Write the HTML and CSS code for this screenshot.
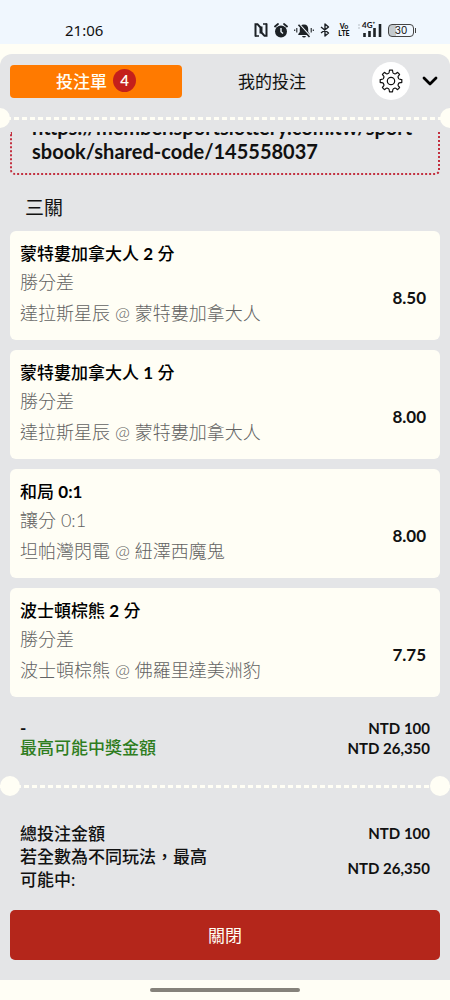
FILE: index.html
```html
<!DOCTYPE html>
<html lang="zh-Hant">
<head>
  <meta charset="UTF-8" />
  <meta name="viewport" content="width=device-width, initial-scale=1" />
  <title>投注單</title>
  <link rel="stylesheet" href="styles.css">
</head>
<body>

  <div class="status-bar">
    <span class="clock">21:06</span>
    <div class="status-icons">
      <svg width="14" height="14" viewBox="0 0 14 14" fill="none" stroke="#1d2226" aria-label="NFC">
        <path d="M1.500 13.500V1.200H3.500L6.500 4.500V10.500" stroke-width="2" />
        <path d="M12.500 .5V12.800H10.500L7.500 9.500V3.500" stroke-width="2" />
        <path d="M1 13H5M9 1H13" stroke-width="1.600" />
      </svg>
      <svg width="14" height="15" viewBox="0 0 14 15" aria-label="Alarm">
        <circle cx="7" cy="8.500" r="6" fill="#1d2226" />
        <path d="M1 3.500L4 1M13 3.500L10 1" stroke="#1d2226" stroke-width="1.800" stroke-linecap="round" />
        <path d="M7 5V8.800L9 10.500" stroke="#f0f7fd" stroke-width="1.400" fill="none" />
      </svg>
      <svg width="20" height="15" viewBox="0 0 20 15" aria-label="Vibrate">
        <path d="M10 1.500C7 1.500 5.800 3.500 5.800 6V9L4.300 11V12H15.700V11L14.200 9V6C14.200 3.500 13 1.500 10 1.500ZM8 13H12Q11.500 14.500 10 14.500Q8.500 14.500 8 13Z" fill="#1d2226" />
        <path d="M5 1L16 13" stroke="#f0f7fd" stroke-width="1.800" />
        <path d="M4.500 1.800L15.500 14" stroke="#1d2226" stroke-width="1.600" />
        <path d="M2.800 5V9.500M.7 6.500V8M17.200 5V9.500M19.300 6.500V8" stroke="#1d2226" stroke-width="1.100" />
      </svg>
      <svg width="10" height="14" viewBox="0 0 10 14" aria-label="Bluetooth">
        <path d="M1 4L8.500 10L5 13V1L8.500 4L1 10" fill="none" stroke="#1d2226" stroke-width="1.400" stroke-linejoin="round" />
      </svg>
      <span class="volte">Vo<br>LTE</span>
      <div class="signal">
        <span class="signal-label">4G⁺</span>
        <svg width="24" height="14" viewBox="0 0 24 14" aria-label="Signal">
          <path d="M1 1V3M1 4V6" stroke="#b5bcc2" stroke-width="1" />
          <path d="M6.500 10V14M11.500 8V14M16.500 5V14M22 1V14" stroke="#1d2226" stroke-width="2.600" />
        </svg>
      </div>
      <div class="battery"><span>30</span></div>
    </div>
  </div>

  <main class="panel">
    <header class="tabs">
      <button class="tab active">投注單 <span class="badge">4</span></button>
      <button class="tab">我的投注</button>
      <button class="settings" aria-label="設定">
        <svg width="24" height="24" viewBox="0 0 24 24" fill="none" stroke="#111" stroke-width="1.200" stroke-linejoin="round">
          <path d="M10.500 1.200H13.500Q13.800 4 14.400 4.300L16 5C16.800 5.200 18 3.600 18.600 3.400L20.600 5.400C20.400 6.200 18.800 7.200 19 8L19.700 9.700C20.100 10.400 22 10.200 22.800 10.600V13.400C22 13.800 20.100 13.600 19.700 14.300L19 16C18.800 16.800 20.400 17.800 20.600 18.600L18.600 20.600C18 20.400 16.800 18.800 16 19L14.400 19.700Q13.800 20 13.500 22.800H10.500Q10.200 20 9.600 19.700L8 19C7.200 18.800 6 20.400 5.400 20.600L3.400 18.600C3.600 17.800 5.200 16.800 5 16L4.300 14.300C3.900 13.600 2 13.800 1.200 13.400V10.600C2 10.200 3.900 10.400 4.300 9.700L5 8C5.200 7.200 3.600 6.200 3.400 5.400L5.400 3.400C6 3.600 7.200 5.200 8 5L9.600 4.300Q10.200 4 10.500 1.200Z" />
          <circle cx="12" cy="12" r="3.700" />
        </svg>
      </button>
      <button class="collapse" aria-label="收合">
        <svg width="16" height="12" viewBox="0 0 16 12" fill="none" stroke="#000" stroke-width="2.800" stroke-linecap="round" stroke-linejoin="round">
          <path d="M2 3L8 9L14 3" />
        </svg>
      </button>
    </header>

    <div class="divider divider-edge"></div>

    <div class="share-box">
      <p>https://member.sportslottery.com.tw/sportsbook/shared-code/145558037</p>
    </div>

    <h2>三關</h2>

    <section class="bets">
      <article class="bet">
        <h3>蒙特婁加拿大人 <b>2</b> 分</h3>
        <div class="bet-row">
          <div class="bet-info">
            <p class="market">勝分差</p>
            <p class="match">達拉斯星辰 @ 蒙特婁加拿大人</p>
          </div>
          <span class="odds">8.50</span>
        </div>
      </article>

      <article class="bet">
        <h3>蒙特婁加拿大人 <b>1</b> 分</h3>
        <div class="bet-row">
          <div class="bet-info">
            <p class="market">勝分差</p>
            <p class="match">達拉斯星辰 @ 蒙特婁加拿大人</p>
          </div>
          <span class="odds">8.00</span>
        </div>
      </article>

      <article class="bet">
        <h3>和局 <b>0:1</b></h3>
        <div class="bet-row">
          <div class="bet-info">
            <p class="market">讓分 0:1</p>
            <p class="match">坦帕灣閃電 @ 紐澤西魔鬼</p>
          </div>
          <span class="odds">8.00</span>
        </div>
      </article>

      <article class="bet">
        <h3>波士頓棕熊 <b>2</b> 分</h3>
        <div class="bet-row">
          <div class="bet-info">
            <p class="market">勝分差</p>
            <p class="match">波士頓棕熊 @ 佛羅里達美洲豹</p>
          </div>
          <span class="odds">7.75</span>
        </div>
      </article>
    </section>

    <section class="summary">
      <div class="summary-row">
        <span class="stake">-</span>
        <span class="amount">NTD 100</span>
      </div>
      <div class="summary-row">
        <span class="win">最高可能中獎金額</span>
        <span class="amount">NTD 26,350</span>
      </div>
    </section>

    <div class="divider"></div>

    <section class="totals">
      <div class="total-row">
        <span class="total-label">總投注金額</span>
        <span class="amount">NTD 100</span>
      </div>
      <div class="total-row">
        <span class="total-label">若全數為不同玩法，最高可能中:</span>
        <span class="amount">NTD 26,350</span>
      </div>
    </section>

    <button class="close">關閉</button>
  </main>

  <div class="home-bar"></div>

</body>
</html>
```

FILE: styles.css
```css
* {
  box-sizing: border-box;
}

body {
  margin: 0;
  font-family: Lato, "Noto Sans CJK TC", sans-serif;
  font-size: 17px;
  background: #fffef5;
  color: #111;
}

h2,
h3,
p {
  margin: 0;
}

button {
  border: none;
  padding: 0;
  background: none;
  font-family: inherit;
  font-size: inherit;
  color: inherit;
  cursor: pointer;
}

svg {
  display: block;
}

.status-bar {
  display: flex;
  justify-content: space-between;
  align-items: center;
  height: 44px;
  padding: 16px 36px 0 65px;
  background: #f0f7fe;
}

.clock {
  font-family: "Noto Sans", sans-serif;
  font-size: 15px;
}

.status-icons {
  display: flex;
  align-items: center;
  gap: 6px;
}

.volte {
  width: 12px;
  margin: 0 2px;
  font-size: 7px;
  font-weight: 900;
  line-height: 7px;
  text-align: center;
}

.signal {
  position: relative;
}

.signal-label {
  position: absolute;
  top: -2px;
  left: 4px;
  font-size: 8px;
  font-weight: 700;
  line-height: 8px;
}

.battery {
  position: relative;
  width: 26px;
  height: 13px;
  border: 1px solid #444;
  border-radius: 4px;
  background: linear-gradient(to right, #c4cace 30%, transparent 30%);
  font-family: Inter, sans-serif;
  font-size: 10px;
  line-height: 11px;
  text-align: center;
}

.battery::after {
  content: "";
  position: absolute;
  top: 3px;
  right: -3px;
  width: 1px;
  height: 5px;
  background: #444;
}

.panel {
  margin-top: 10px;
  padding-bottom: 20px;
  border-radius: 12px 12px 0 0;
  background: #e4e5e7;
  overflow: hidden;
}

.tabs {
  display: flex;
  align-items: center;
  padding: 8px 12px 8px 10px;
}

.tab {
  flex: 1;
  display: flex;
  align-items: center;
  justify-content: center;
  gap: 6px;
  height: 33px;
  margin-right: 4px;
  padding-bottom: 1px;
  border-radius: 4px;
}

.tab.active {
  background: #ff7a00;
  color: #fffef5;
  font-weight: 500;
}

.badge {
  width: 23px;
  border-radius: 50%;
  background: #c4201b;
  font-size: 15px;
  font-weight: 600;
  line-height: 23px;
}

.settings {
  display: flex;
  align-items: center;
  justify-content: center;
  width: 38px;
  height: 38px;
  margin: 0 12px 0 10px;
  border-radius: 50%;
  background: #fff;
}

.divider {
  display: flex;
  align-items: center;
  justify-content: space-between;
  height: 20px;
  background: repeating-linear-gradient(to right, #fffef5 0 5px, transparent 5px 8px) center / 100% 3px no-repeat;
}

.divider::before,
.divider::after {
  content: "";
  width: 20px;
  height: 20px;
  border-radius: 50%;
  background: #fffef5;
}

.divider-edge {
  margin: 0 -10px;
}

/* only the tail of the link stays visible below the header */
.share-box {
  display: flex;
  align-items: flex-end;
  height: 43px;
  margin: 4px 10px 0;
  padding: 0 20px 10px;
  border: 2px dotted #c23040;
  border-top: none;
  border-radius: 0 0 5px 5px;
  overflow: hidden;
}

.share-box p {
  font-size: 20px;
  font-weight: 700;
  line-height: 24px;
  word-break: break-all;
}

h2 {
  padding: 18px 25px 8px;
  font-size: 19px;
  font-weight: 400;
  line-height: 30px;
}

.bets {
  display: flex;
  flex-direction: column;
  gap: 10px;
  padding: 0 10px;
}

.bet {
  padding: 9px 14px 9px 10px;
  border-radius: 6px;
  background: #fffef5;
}

.bet h3 {
  font-size: 17px;
  font-weight: 500;
  line-height: 28px;
  color: #000;
}

.bet-row {
  display: flex;
  align-items: center;
  justify-content: space-between;
}

.bet-info {
  color: #626262;
  font-size: 18px;
  font-weight: 300;
}

.market {
  line-height: 28px;
}

.match {
  line-height: 35px;
}

.odds {
  padding-bottom: 4px;
  font-size: 17px;
  font-weight: 700;
}

.summary {
  padding: 21px 20px 18px;
}

.summary-row {
  display: flex;
  justify-content: space-between;
  font-weight: 500;
  line-height: 20px;
}

.stake {
  font-weight: 700;
}

.win {
  color: #2e7d20;
}

.amount {
  font-size: 15px;
  font-weight: 700;
}

.totals {
  padding: 26px 20px 19px;
}

.total-row {
  display: flex;
  align-items: center;
  justify-content: space-between;
  font-weight: 500;
  line-height: 23px;
}

.total-label {
  width: 48%;
}

.close {
  display: block;
  width: calc(100% - 20px);
  height: 50px;
  margin: 0 10px;
  padding-bottom: 2px;
  border-radius: 5px;
  background: #b4261b;
  color: #fffef5;
}

.home-bar {
  width: 150px;
  height: 4px;
  margin: 8px auto;
  border-radius: 2px;
  background: #85827a;
}
```
